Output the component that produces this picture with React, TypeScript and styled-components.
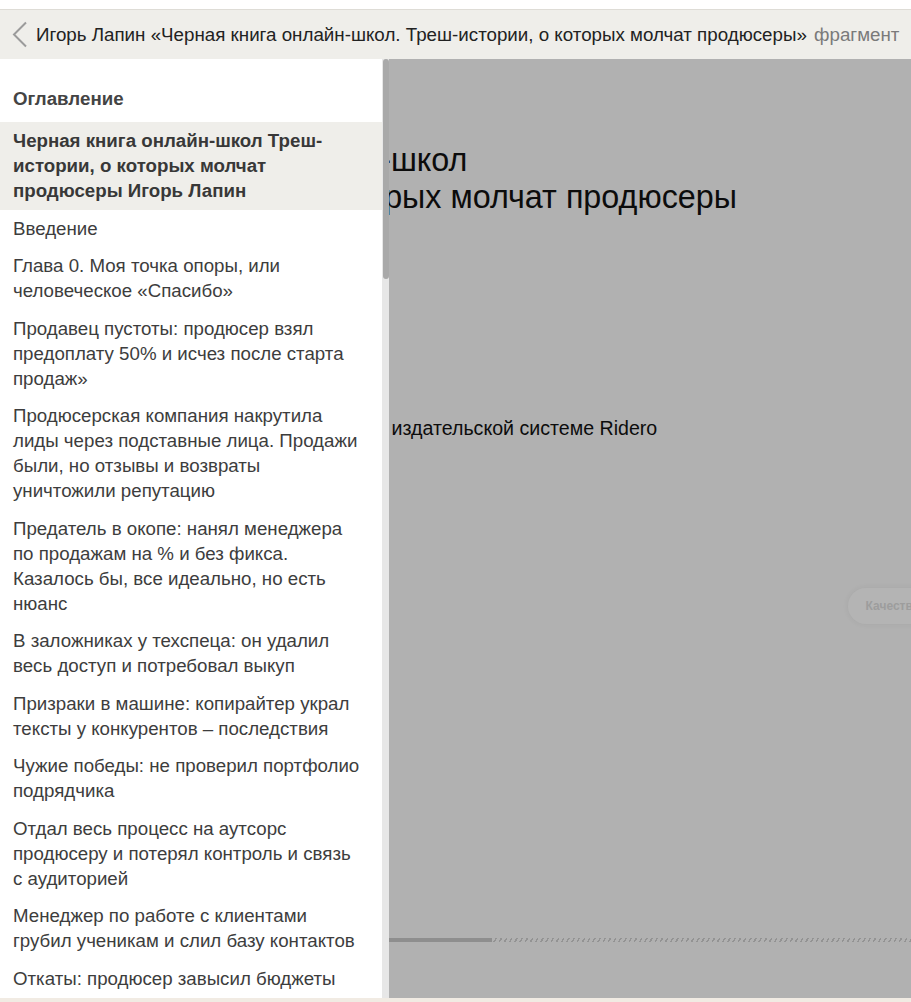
import React from "react";
import styled, { createGlobalStyle } from "styled-components";

const GlobalStyle = createGlobalStyle`
  html, body {
    margin: 0;
    padding: 0;
    background: #ffffff;
  }
  body {
    font-family: "Liberation Sans", Arial, sans-serif;
    overflow: hidden;
  }
`;

const Page = styled.div`
  width: 911px;
  height: 1002px;
  display: flex;
  flex-direction: column;
  padding-top: 9px;
  box-sizing: border-box;
  overflow: hidden;
`;

const Header = styled.header`
  height: 50px;
  flex: none;
  display: flex;
  align-items: center;
  gap: 8px;
  padding-left: 11px;
  background: #efeeea;
  border-top: 1px solid #dedcd6;
  box-sizing: border-box;
  white-space: nowrap;
  overflow: hidden;
`;

const BackButton = styled.button`
  border: 0;
  padding: 0;
  background: none;
  display: flex;
  align-items: center;
  cursor: pointer;
`;

const BookTitle = styled.span`
  font-size: 18.75px;
  color: #222222;
`;

const Fragment = styled.span`
  color: #7a7a7a;
  margin-left: 2px;
`;

const Workspace = styled.main`
  flex: 1;
  display: flex;
  min-height: 0;
`;

const Drawer = styled.aside`
  flex: none;
  display: flex;
  background: #ffffff;
`;

const Toc = styled.nav`
  width: 382px;
  overflow: hidden;
  font-size: 18.7px;
  line-height: 25px;
`;

const TocHeading = styled.div`
  padding: 27px 22px 11px 13px;
  font-weight: 700;
  color: #444444;
`;

const TocItem = styled.div<{ $active?: boolean }>`
  padding: 6.25px 22px 6.25px 13px;
  background: ${(p) => (p.$active ? "#efeeea" : "transparent")};
  font-weight: ${(p) => (p.$active ? 700 : 400)};
  color: ${(p) => (p.$active ? "#383838" : "#3d3d3d")};
  cursor: pointer;
`;

const ScrollTrack = styled.div`
  width: 7px;
  background: #e7e7e7;
  display: flex;
  justify-content: center;
`;

const ScrollThumb = styled.div`
  width: 6px;
  height: 220px;
  border-radius: 3px;
  background: #a9a9a9;
`;

/* the book page behind the dimmed drawer; only its right part is visible */
const Reader = styled.section`
  flex: 1;
  min-width: 0;
  overflow: hidden;
  background: #b1b1b1;
`;

const BookPage = styled.div`
  height: 100%;
  display: flex;
  flex-direction: column;
  margin-left: -389px;
  padding: 83px 0 56px 61px;
  box-sizing: border-box;
  color: #0c0c0c;
`;

const CoverTitle = styled.h1`
  margin: 0 0 0 3px;
  font-weight: 400;
  font-size: 32.3px;
  line-height: 37px;
  white-space: nowrap;
`;

const Imprint = styled.p`
  margin: 200px 0 0 7px;
  font-size: 19.6px;
  line-height: 24px;
  white-space: nowrap;
`;

const ControlRow = styled.div`
  display: flex;
  justify-content: flex-end;
  margin-top: 148px;
  margin-right: -31px;
`;

const QualityPill = styled.div`
  height: 36px;
  padding: 0 22px 0 18px;
  display: flex;
  align-items: center;
  border-radius: 18px;
  background: #b4b4b4;
  box-shadow: 0 0 6px rgba(0, 0, 0, 0.06);
  color: #9d9d9d;
  font-size: 12px;
  font-weight: 700;
`;

const Progress = styled.div`
  margin-top: auto;
  margin-left: -61px;
  height: 4px;
  display: flex;
`;

const ProgressDone = styled.div`
  background: #8e8e8e;
`;

const ProgressRest = styled.div`
  flex: 1;
  background: repeating-linear-gradient(
    120deg,
    transparent 0 3px,
    #939393 3px 4.5px
  );
`;

const Footer = styled.footer`
  height: 4px;
  flex: none;
  background: #f1ebe3;
`;

const chapters = [
  "Черная книга онлайн-школ Треш-истории, о которых молчат продюсеры Игорь Лапин",
  "Введение",
  "Глава 0. Моя точка опоры, или человеческое «Спасибо»",
  "Продавец пустоты: продюсер взял предоплату 50% и исчез после старта продаж»",
  "Продюсерская компания накрутила лиды через подставные лица. Продажи были, но отзывы и возвраты уничтожили репутацию",
  "Предатель в окопе: нанял менеджера по продажам на % и без фикса. Казалось бы, все идеально, но есть нюанс",
  "В заложниках у техспеца: он удалил весь доступ и потребовал выкуп",
  "Призраки в машине: копирайтер украл тексты у конкурентов – последствия",
  "Чужие победы: не проверил портфолио подрядчика",
  "Отдал весь процесс на аутсорс продюсеру и потерял контроль и связь с аудиторией",
  "Менеджер по работе с клиентами грубил ученикам и слил базу контактов",
  "Откаты: продюсер завысил бюджеты на рекламу",
  "Заключение",
];

function ChevronLeft() {
  return (
    <svg width="17" height="27" viewBox="0 0 17 27" fill="none">
      <path d="M15 1.5 L3 13.5 L15 25.5" stroke="#9b9b9b" strokeWidth="2" />
    </svg>
  );
}

export default function App() {
  return (
    <>
      <GlobalStyle />
      <Page>
        <Header>
          <BackButton aria-label="Назад">
            <ChevronLeft />
          </BackButton>
          <BookTitle>
            Игорь Лапин «Черная книга онлайн-школ. Треш-истории, о которых молчат продюсеры»{" "}
            <Fragment>фрагмент</Fragment>
          </BookTitle>
        </Header>
        <Workspace>
          <Drawer>
            <Toc>
              <TocHeading>Оглавление</TocHeading>
              {chapters.map((title, i) => (
                <TocItem key={i} $active={i === 0}>
                  {title}
                </TocItem>
              ))}
            </Toc>
            <ScrollTrack>
              <ScrollThumb />
            </ScrollTrack>
          </Drawer>
          <Reader>
            <BookPage>
              <CoverTitle>
                Черная книга онлайн-школ
                <br />
                Треш-истории, о которых молчат продюсеры
              </CoverTitle>
              <Imprint>Книга создана в интеллектуальной издательской системе Ridero</Imprint>
              <ControlRow>
                <QualityPill>Качество</QualityPill>
              </ControlRow>
              <Progress>
                <ProgressDone style={{ width: 492 }} />
                <ProgressRest />
              </Progress>
            </BookPage>
          </Reader>
        </Workspace>
        <Footer />
      </Page>
    </>
  );
}
